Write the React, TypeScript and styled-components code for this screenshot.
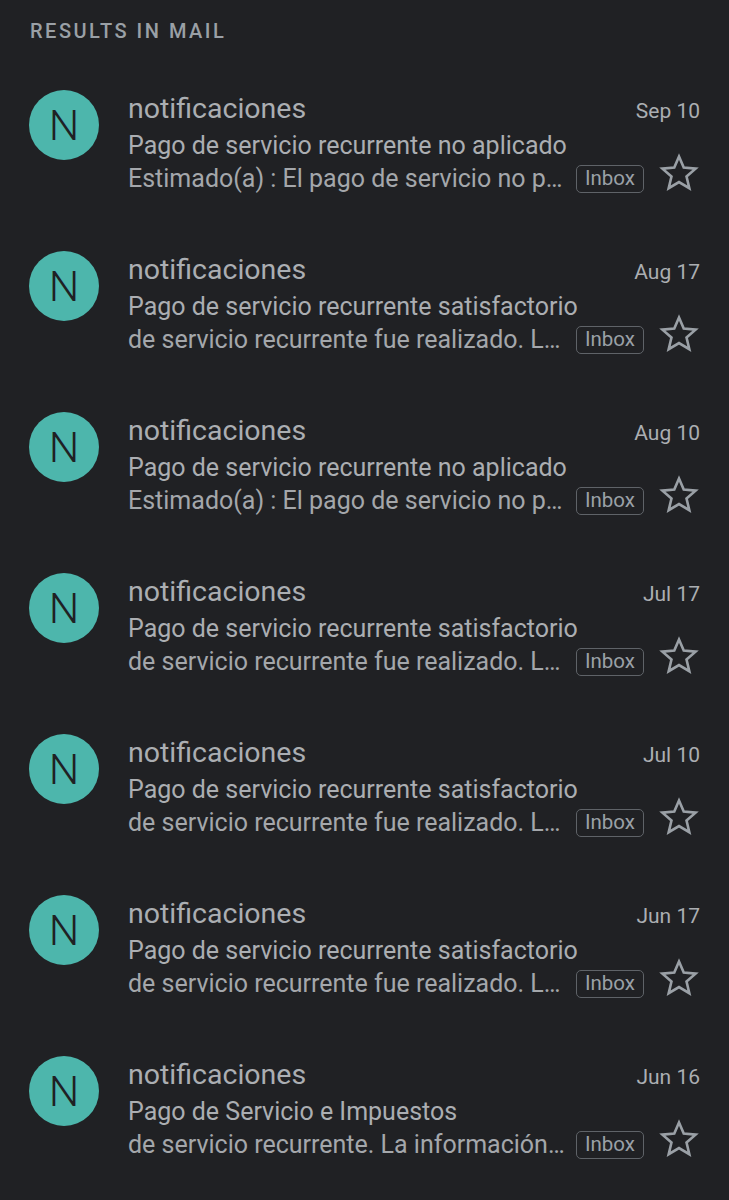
import styled, { createGlobalStyle } from "styled-components";

const GlobalStyle = createGlobalStyle`
  body {
    margin: 0;
    background: #202124;
    font-family: Roboto, "Noto Sans", sans-serif;
  }
`;

const Page = styled.main`
  width: 729px;
  min-height: 1200px;
  background: #202124;
  overflow: hidden;
`;

const Header = styled.h2`
  margin: 0;
  padding: 19px 30px 0;
  height: 90px;
  box-sizing: border-box;
  font-size: 20px;
  font-weight: 500;
  letter-spacing: 2.5px;
  color: #9aa0a6;
  line-height: 24px;
`;

const Row = styled.div`
  display: flex;
  align-items: flex-start;
  gap: 29px;
  height: 161px;
  padding: 0 29px;
  box-sizing: border-box;
`;

const Avatar = styled.div`
  flex: none;
  width: 70px;
  height: 70px;
  border-radius: 50%;
  background: #4db6ac;
  color: #1f2124;
  display: flex;
  align-items: center;
  justify-content: center;
  font-size: 43px;
  font-weight: 300;
`;

const Body = styled.div`
  flex: 1;
  min-width: 0;
  display: flex;
  flex-direction: column;
`;

const TopLine = styled.div`
  display: flex;
  align-items: center;
  justify-content: space-between;
  height: 37px;
  margin-bottom: 2px;
`;

const Sender = styled.span`
  font-size: 28.5px;
  color: #abaeb2;
`;

const Date = styled.span`
  font-size: 21px;
  color: #abaeb2;
  padding-top: 4px;
`;

const Subject = styled.div`
  font-size: 25px;
  line-height: 33px;
  color: #abaeb2;
  white-space: nowrap;
  overflow: hidden;
`;

const SnippetLine = styled.div`
  display: flex;
  align-items: center;
  height: 33px;
`;

const Snippet = styled.span`
  flex: 1;
  min-width: 0;
  font-size: 25px;
  line-height: 33px;
  color: #a4a7ab;
  white-space: nowrap;
  overflow: hidden;
  text-overflow: ellipsis;
`;

const Chip = styled.span`
  flex: none;
  margin-left: 11px;
  height: 28px;
  box-sizing: border-box;
  padding: 0 8px;
  border: 1.5px solid #5f6368;
  border-radius: 5px;
  font-size: 20.5px;
  line-height: 25px;
  color: #9aa0a6;
`;

const StarButton = styled.span`
  flex: none;
  margin-left: 14px;
  width: 42px;
  height: 42px;
  display: flex;
  align-items: center;
  justify-content: center;
  margin-top: -12px;
`;

const Star = () => (
  <svg width="42" height="42" viewBox="0 0 24 24">
    <polygon
      points="12,2.6 14.7,8.9 21.5,9.5 16.3,14 17.9,20.7 12,17.2 6.1,20.7 7.7,14 2.5,9.5 9.3,8.9"
      fill="none"
      stroke="#9aa0a6"
      strokeWidth="1.5"
      strokeLinejoin="miter"
    />
  </svg>
);

const mails = [
  { date: "Sep 10", subject: "Pago de servicio recurrente no aplicado", snippet: "Estimado(a) : El pago de servicio no pudo ser aplicado" },
  { date: "Aug 17", subject: "Pago de servicio recurrente satisfactorio", snippet: "de servicio recurrente fue realizado. La información" },
  { date: "Aug 10", subject: "Pago de servicio recurrente no aplicado", snippet: "Estimado(a) : El pago de servicio no pudo ser aplicado" },
  { date: "Jul 17", subject: "Pago de servicio recurrente satisfactorio", snippet: "de servicio recurrente fue realizado. La información" },
  { date: "Jul 10", subject: "Pago de servicio recurrente satisfactorio", snippet: "de servicio recurrente fue realizado. La información" },
  { date: "Jun 17", subject: "Pago de servicio recurrente satisfactorio", snippet: "de servicio recurrente fue realizado. La información" },
  { date: "Jun 16", subject: "Pago de Servicio e Impuestos", snippet: "de servicio recurrente. La información del pago" },
];

export default function App() {
  return (
    <Page>
      <GlobalStyle />
      <Header>RESULTS IN MAIL</Header>
      {mails.map((m, i) => (
        <Row key={i}>
          <Avatar>N</Avatar>
          <Body>
            <TopLine>
              <Sender>notificaciones</Sender>
              <Date>{m.date}</Date>
            </TopLine>
            <Subject>{m.subject}</Subject>
            <SnippetLine>
              <Snippet>{m.snippet}</Snippet>
              <Chip>Inbox</Chip>
              <StarButton>
                <Star />
              </StarButton>
            </SnippetLine>
          </Body>
        </Row>
      ))}
    </Page>
  );
}
